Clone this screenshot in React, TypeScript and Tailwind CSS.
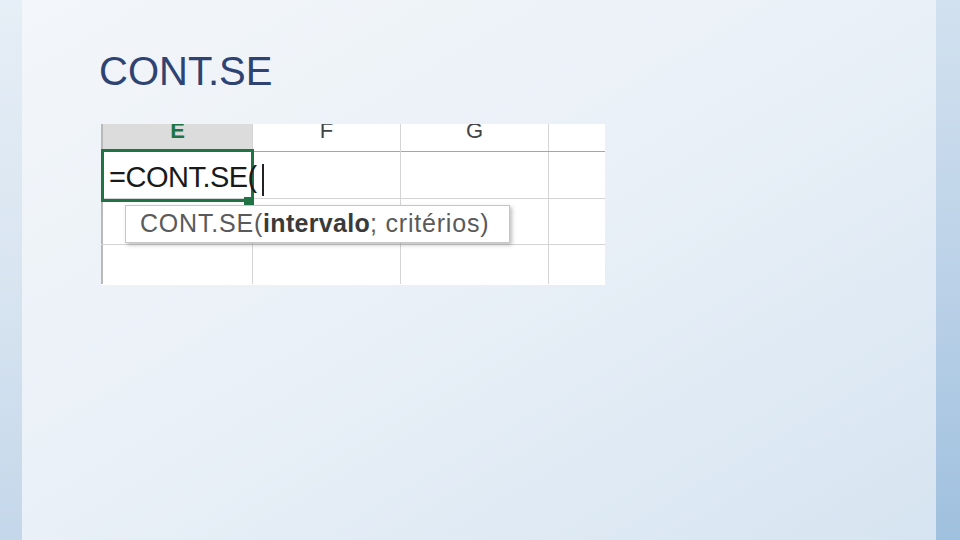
export default function App() {
  const font = { fontFamily: '"Liberation Sans", Arial, sans-serif' };
  return (
    <div className="flex w-[960px] h-[540px] overflow-hidden" style={font}>
      <div className="w-[22px] h-full bg-gradient-to-b from-[#e6eef6] via-[#d9e5f1] to-[#c4d7ea]" />
      <div className="flex-1 h-full bg-gradient-to-br from-[#f3f6fa] via-[#e9f0f7] to-[#d6e4f1] pl-[77px] pt-[48px]">
        <h1 className="text-[40px] leading-[46px] text-[#2f4373]">CONT.SE</h1>
        <div className="relative mt-[30px] ml-[2px] w-[504px] h-[161px] bg-white overflow-hidden">
          <div className="flex h-[28px] border-b border-[#a6a6a6]">
            <div className="w-[151px] bg-[#dcdcdc] border-l-2 border-[#b9b9b9] flex justify-center items-start text-[22px] leading-[24px] font-bold text-[#217346] -mt-[5px] h-[33px]">E</div>
            <div className="w-[148px] border-l border-[#d4d4d4] flex justify-center items-start text-[22px] leading-[24px] text-[#444] -mt-[5px] h-[33px]">F</div>
            <div className="w-[148px] border-l border-[#d4d4d4] flex justify-center items-start text-[22px] leading-[24px] text-[#444] -mt-[5px] h-[33px]">G</div>
            <div className="w-[57px] border-l border-[#d4d4d4]" />
          </div>
          {[47, 46, 39].map((h, i) => (
            <div key={i} className={"flex " + (i < 2 ? "border-b border-[#d4d4d4]" : "")} style={{ height: h }}>
              <div className="w-[151px] border-l-2 border-[#b9b9b9]" />
              <div className="w-[148px] border-l border-[#d4d4d4]" />
              <div className="w-[148px] border-l border-[#d4d4d4]" />
              <div className="w-[57px] border-l border-[#d4d4d4]" />
            </div>
          ))}
          <div className="absolute left-0 top-[25px] w-[153px] h-[53px] border-[3px] border-[#217346] flex items-end pb-[7px] pl-[5px]">
            <span className="text-[29px] leading-none text-[#1a1a1a] tracking-[-0.5px] whitespace-nowrap">=CONT.SE(</span>
            <span className="absolute left-[158px] top-[12px] w-[2px] h-[32px] bg-[#222]" />
          </div>
          <div className="absolute left-[143px] top-[73px] w-[10px] h-[8px] bg-[#217346]" />
          <div className="absolute left-[24px] top-[81px] w-[385px] h-[38px] bg-white border border-[#c6c6c6] shadow-[2px_2px_4px_rgba(0,0,0,0.25)] flex items-center pl-[14px] text-[25px] text-[#5a5a5a] whitespace-nowrap tracking-[0.8px]">
            CONT.SE(<span className="font-bold text-[#3a3a3a] tracking-[0.3px]">intervalo</span>; critérios)
          </div>
        </div>
      </div>
      <div className="w-[24px] h-full bg-gradient-to-b from-[#d2e1ef] via-[#bcd2e8] to-[#9fc0de]" />
    </div>
  );
}
